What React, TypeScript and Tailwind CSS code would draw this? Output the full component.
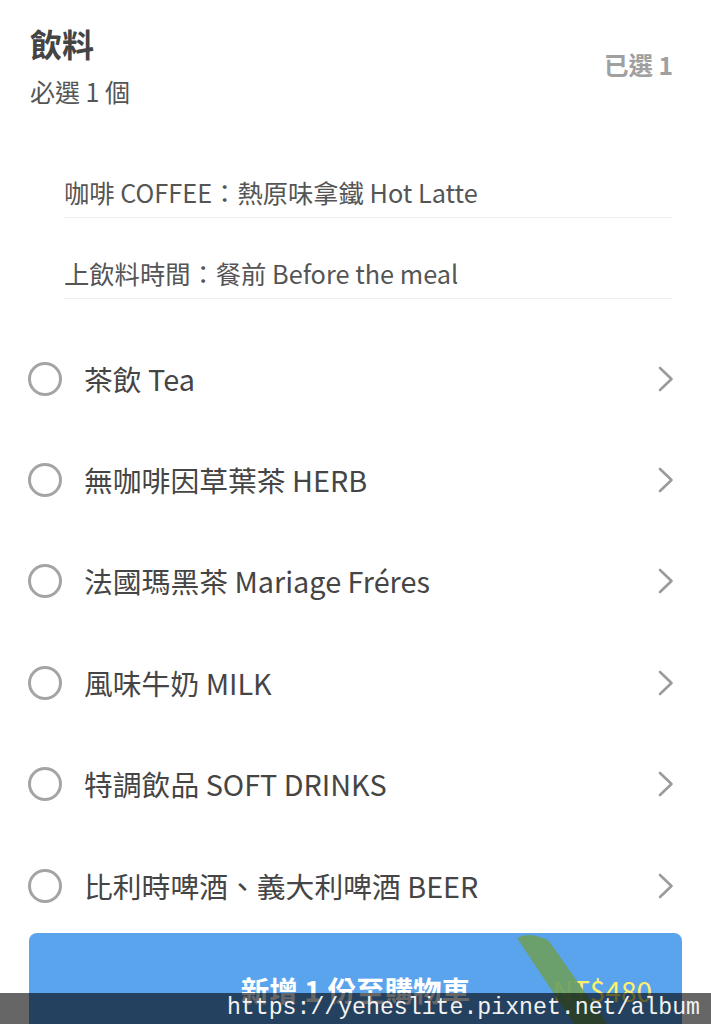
import React from "react";

const items = [
  "茶飲 Tea",
  "無咖啡因草葉茶 HERB",
  "法國瑪黑茶 Mariage Fréres",
  "風味牛奶 MILK",
  "特調飲品 SOFT DRINKS",
  "比利時啤酒、義大利啤酒 BEER",
];

function Chevron() {
  return (
    <svg width="16" height="26" viewBox="0 0 16 26" className="shrink-0">
      <polyline
        points="2,2 13.5,13 2,24"
        fill="none"
        stroke="#9b9b9b"
        strokeWidth="2.6"
        strokeLinecap="round"
        strokeLinejoin="round"
      />
    </svg>
  );
}

export default function App() {
  return (
    <div
      className="relative w-[711px] h-[1024px] overflow-hidden bg-white"
      style={{ fontFamily: '"Noto Sans CJK TC", "Noto Sans", sans-serif' }}
    >
      {/* header */}
      <div className="flex items-center justify-between pl-[30px] pr-[38px] pt-[23px]">
        <div className="flex flex-col">
          <div className="text-[32px] leading-[40px] font-bold text-[#444444]">飲料</div>
          <div className="mt-[12px] text-[25px] leading-[32px] text-[#555555]">必選 1 個</div>
        </div>
        <div className="text-[24.5px] leading-[32px] font-bold text-[#a0a0a0]">已選 1</div>
      </div>

      {/* selected sub-items */}
      <div className="mt-[30px] ml-[64px] mr-[39px] flex flex-col">
        <div className="pt-[39px] pb-[9px] border-b border-[#efefef] text-[25.3px] leading-[32px] text-[#555555]">
          咖啡 COFFEE：熱原味拿鐵 Hot Latte
        </div>
        <div className="pt-[39px] pb-[9px] border-b border-[#efefef] text-[25.3px] leading-[32px] text-[#555555]">
          上飲料時間：餐前 Before the meal
        </div>
      </div>

      {/* option list */}
      <div className="mt-[29px] flex flex-col">
        {items.map((t) => (
          <div key={t} className="h-[101.4px] flex items-center pl-[28px] pr-[37px]">
            <div className="w-[34px] h-[34px] rounded-full border-[3px] border-[#a4a4a4] shrink-0" />
            <div className="ml-[22px] flex-1 text-[28.8px] leading-[36px] text-[#454545]">{t}</div>
            <Chevron />
          </div>
        ))}
      </div>

      {/* add to cart button */}
      <div className="-mt-[3px] mx-[29px] h-[114px] rounded-t-[8px] bg-[#5aa4ee] grid grid-cols-[1fr_auto_1fr] items-center">
        <div />
        <div className="text-[28.5px] leading-[36px] font-bold text-white">新增 1 份至購物車</div>
        <div className="flex justify-end pr-[30px] text-[28px] leading-[36px] text-[#fff06a]">NT$480</div>
      </div>

      {/* green stroke overlay */}
      <svg className="absolute left-0 top-0 pointer-events-none" width="711" height="1024" viewBox="0 0 711 1024">
        <path d="M517 938 Q530 931 549 941 L607 1024 L574 1024 Z" fill="#6d9f62" opacity="0.92" />
      </svg>

      {/* watermark */}
      <div className="absolute left-0 right-0 bottom-0 h-[31px] bg-black/60 flex items-center justify-end pr-[11px]">
        <span
          className="text-[23.2px] leading-[31px] text-[#f2f2f2]"
          style={{ fontFamily: '"Liberation Mono", monospace' }}
        >
          https://yeheslite.pixnet.net/album
        </span>
      </div>
    </div>
  );
}
